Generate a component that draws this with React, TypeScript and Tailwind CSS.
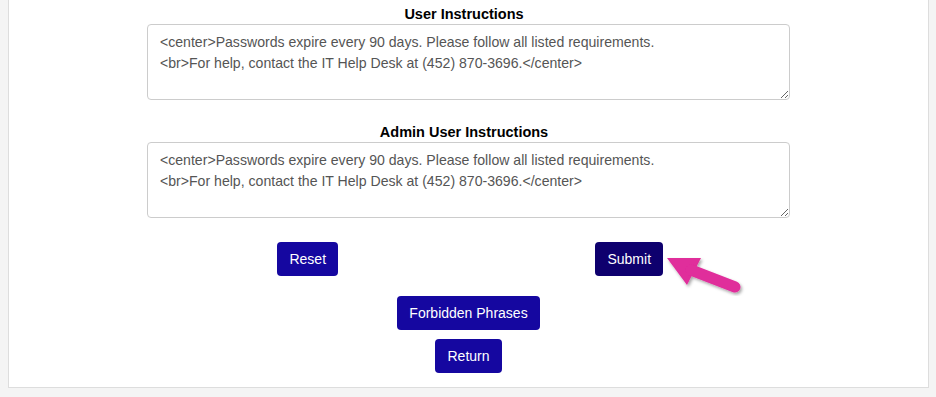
const instructions =
  "<center>Passwords expire every 90 days. Please follow all listed requirements.\n<br>For help, contact the IT Help Desk at (452) 870-3696.</center>";

export default function App() {
  return (
    <div className="min-h-[397px] bg-[#f4f4f4] pl-2 pr-[7px] font-['Liberation_Sans',Arial,sans-serif]">
      <div className="relative border border-t-0 border-[#dddddd] bg-white px-[138px] pt-1 pb-[14px]">
        <Field label="User Instructions" value={instructions} />
        <div className="mt-[22px]">
          <Field label="Admin User Instructions" value={instructions} />
        </div>

        <div className="mt-6 grid grid-cols-2">
          <div className="flex justify-center">
            <Button className="bg-[#1507a0]">Reset</Button>
          </div>
          <div className="flex justify-center">
            <Button className="bg-[#0e006e]">Submit</Button>
          </div>
        </div>

        <div className="mt-5 flex flex-col items-center gap-[9px]">
          <Button className="bg-[#1507a0]">Forbidden Phrases</Button>
          <Button className="bg-[#1507a0]">Return</Button>
        </div>

        <Arrow />
      </div>
    </div>
  );
}

function Field({ label, value }: { label: string; value: string }) {
  return (
    <div>
      <div className="pr-[9px] text-center text-[14.5px] leading-5 font-bold text-black">{label}</div>
      <textarea
        defaultValue={value}
        className="block h-[76px] w-full rounded border border-[#cccccc] bg-white px-3 py-[7px] text-[14.1px] leading-[21px] text-[#555555] outline-none"
      />
    </div>
  );
}

function Button({ children, className }: { children: React.ReactNode; className?: string }) {
  return (
    <button
      className={`h-[34px] rounded px-3 text-[14px] leading-5 text-white ${className}`}
    >
      {children}
    </button>
  );
}

function Arrow() {
  return (
    <svg
      className="absolute left-[656px] top-[250px]"
      width="90"
      height="50"
      viewBox="0 0 90 50"
    >
      <defs>
        <filter id="sh" x="-20%" y="-20%" width="150%" height="150%">
          <feDropShadow dx="1.5" dy="2" stdDeviation="1.5" floodColor="#000" floodOpacity="0.35" />
        </filter>
      </defs>
      <g filter="url(#sh)" fill="#e02d9b">
        <path d="M2 8 L36 8 L22 35 Z" />
        <line x1="26" y1="20" x2="70" y2="37" stroke="#e02d9b" strokeWidth="11" strokeLinecap="round" />
      </g>
    </svg>
  );
}
